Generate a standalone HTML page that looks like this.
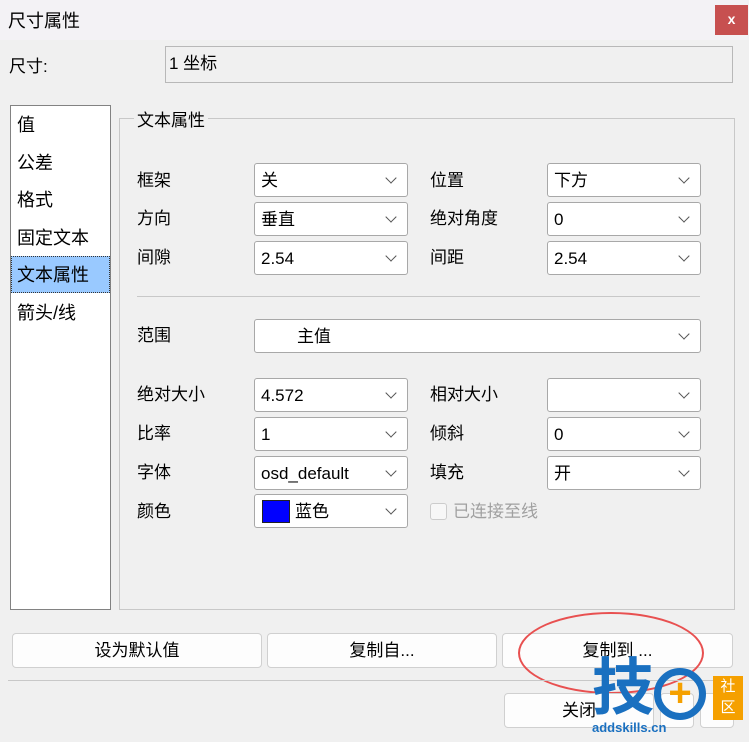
<!DOCTYPE html><html><head><meta charset="utf-8"><style>
body{margin:0;width:749px;height:742px;background:#f0f0f0;font-family:"Liberation Sans","Noto Sans CJK SC",sans-serif;font-size:17px;color:#000;position:relative;overflow:hidden}
.a{position:absolute}
.cb{position:absolute;background:#fff;border:1px solid #a8a8a8;border-radius:3px;height:34px;box-sizing:border-box;padding-left:6px;line-height:33px}
.cb:after{content:"";position:absolute;right:12px;top:10px;width:7px;height:7px;border-right:1.3px solid #555;border-bottom:1.3px solid #555;transform:rotate(45deg)}
.lb{position:absolute;left:137px;margin-top:-5px}
.rl{margin-top:-5px}
.btn{position:absolute;background:#fdfdfd;border:1px solid #d0d0d0;border-radius:4px;height:35px;box-sizing:border-box;text-align:center;line-height:33px}
</style></head><body>
<div class="a" style="left:0;top:0;width:749px;height:40px;background:#f3f2f5"></div>
<div class="a" style="left:8px;top:7px;font-size:18px">尺寸属性</div>
<div class="a" style="left:715px;top:5px;width:33px;height:30px;background:#c75050;color:#fff;text-align:center;line-height:28px;font-weight:bold;font-size:14px">x</div>
<div class="a" style="left:9px;top:52px">尺寸:</div>
<div class="a" style="left:165px;top:46px;width:568px;height:37px;border:1px solid #b8b8b8;box-sizing:border-box;padding:2px 3px">1 坐标</div>
<div class="a" style="left:10px;top:105px;width:101px;height:505px;background:#fff;border:1px solid #828282;box-sizing:border-box"></div>
<div class="a" style="left:11px;top:256px;width:99px;height:37px;background:#99c9ff;border:1px dotted #333;box-sizing:border-box"></div>
<div class="a" style="left:17px;top:107px;line-height:37.5px;font-size:18px">值<br>公差<br>格式<br>固定文本<br>文本属性<br>箭头/线</div>
<div class="a" style="left:119px;top:118px;width:616px;height:492px;border:1px solid #c8c8c8;box-sizing:border-box"></div>
<div class="a" style="left:134px;top:106px;background:#f0f0f0;padding:0 3px">文本属性</div>
<div class="lb" style="top:171px">框架</div><div class="cb" style="left:254px;top:163px;width:154px">关</div>
<div class="lb" style="top:209px">方向</div><div class="cb" style="left:254px;top:202px;width:154px">垂直</div>
<div class="lb" style="top:248px">间隙</div><div class="cb" style="left:254px;top:241px;width:154px">2.54</div>
<div class="a rl" style="left:430px;top:171px">位置</div><div class="cb" style="left:547px;top:163px;width:154px">下方</div>
<div class="a rl" style="left:430px;top:209px">绝对角度</div><div class="cb" style="left:547px;top:202px;width:154px">0</div>
<div class="a rl" style="left:430px;top:248px">间距</div><div class="cb" style="left:547px;top:241px;width:154px">2.54</div>
<div class="a" style="left:137px;top:296px;width:563px;height:1px;background:#c8c8c8"></div>
<div class="lb" style="top:326px">范围</div><div class="cb" style="left:254px;top:319px;width:447px;padding-left:42px">主值</div>
<div class="lb" style="top:385px">绝对大小</div><div class="cb" style="left:254px;top:378px;width:154px">4.572</div>
<div class="lb" style="top:424px">比率</div><div class="cb" style="left:254px;top:417px;width:154px">1</div>
<div class="lb" style="top:463px">字体</div><div class="cb" style="left:254px;top:456px;width:154px">osd_default</div>
<div class="lb" style="top:502px">颜色</div><div class="cb" style="left:254px;top:494px;width:154px;padding-left:40px">蓝色<div class="a" style="left:7px;top:5px;width:28px;height:23px;background:#0000ff;border:1px solid #222;box-sizing:border-box"></div></div>
<div class="a rl" style="left:430px;top:385px">相对大小</div><div class="cb" style="left:547px;top:378px;width:154px"></div>
<div class="a rl" style="left:430px;top:424px">倾斜</div><div class="cb" style="left:547px;top:417px;width:154px">0</div>
<div class="a rl" style="left:430px;top:463px">填充</div><div class="cb" style="left:547px;top:456px;width:154px">开</div>
<div class="a" style="left:430px;top:503px;width:15px;height:15px;border:1px solid #ccc;border-radius:3px;background:#f7f7f7"></div>
<div class="a rl" style="left:453px;top:502px;color:#a0a0a0">已连接至线</div>
<div class="btn" style="left:12px;top:633px;width:250px">设为默认值</div>
<div class="btn" style="left:267px;top:633px;width:230px">复制自...</div>
<div class="btn" style="left:502px;top:633px;width:231px">复制到 ...</div>
<div class="a" style="left:518px;top:612px;width:182px;height:78px;border:2px solid #e85050;border-radius:50%"></div>
<div class="a" style="left:8px;top:680px;width:733px;height:1px;background:#c8c8c8"></div>
<div class="btn" style="left:504px;top:693px;width:150px">关闭</div>
<div class="btn" style="left:660px;top:693px;width:34px"></div>
<div class="btn" style="left:700px;top:693px;width:34px"></div>
<div class="a" style="left:592px;top:654px;font-size:62px;font-weight:bold;color:#1a70c0;line-height:70px">技</div>
<div class="a" style="left:654px;top:668px;width:52px;height:52px;border:7px solid #1a70c0;border-radius:50%;box-sizing:border-box;color:#f5a000;font-size:40px;font-weight:bold;text-align:center;line-height:36px">+</div>
<div class="a" style="left:713px;top:676px;width:30px;height:44px;background:#f5a000;color:#fff;font-size:15px;text-align:center;line-height:21px">社<br>区</div>
<div class="a" style="left:592px;top:720px;font-size:13px;font-weight:bold;color:#1a70c0">addskills.cn</div>
</body></html>
